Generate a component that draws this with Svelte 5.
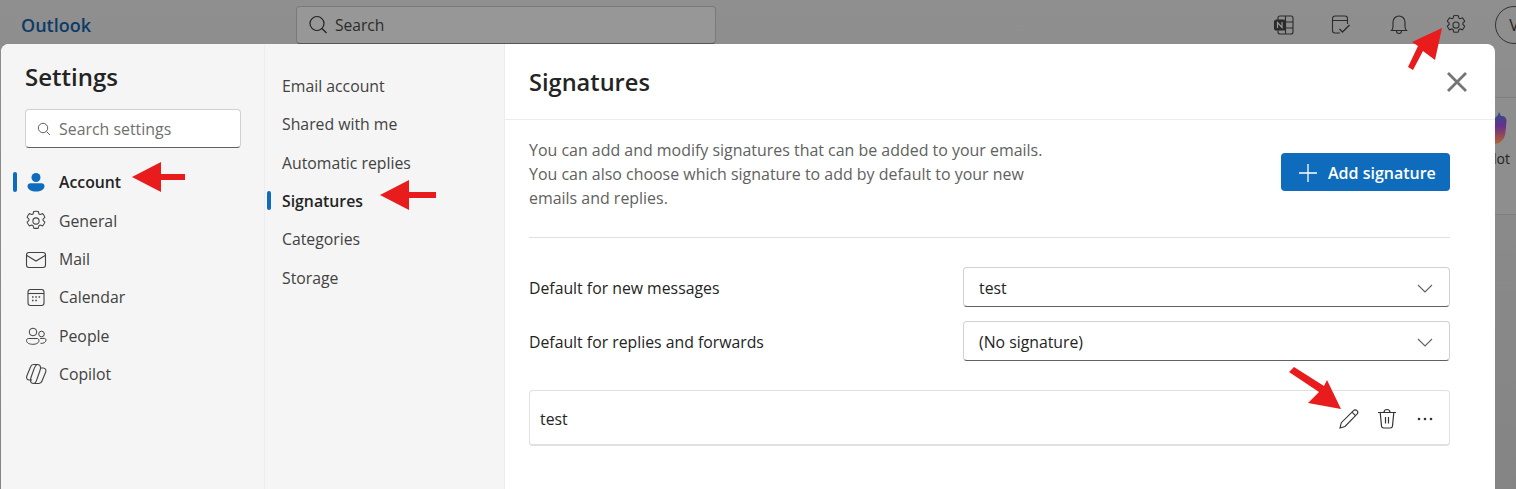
<script>
  const navItems = [
    { label: 'Account', icon: 'account', active: true },
    { label: 'General', icon: 'gear' },
    { label: 'Mail', icon: 'mail' },
    { label: 'Calendar', icon: 'calendar' },
    { label: 'People', icon: 'people' },
    { label: 'Copilot', icon: 'copilot' }
  ]
  const subItems = [
    { label: 'Email account' },
    { label: 'Shared with me' },
    { label: 'Automatic replies' },
    { label: 'Signatures', active: true },
    { label: 'Categories' },
    { label: 'Storage' }
  ]
  const gear = 'M10 2.2c.6 0 1.2.1 1.8.2l.6 2 .9.4 2-.7c.8.8 1.4 1.8 1.8 3l-1.5 1.4v1l1.5 1.4c-.4 1.1-1 2.1-1.8 3l-2-.7-.9.5-.6 2c-1.2.3-2.4.3-3.6 0l-.6-2-.9-.5-2 .7c-.8-.9-1.4-1.9-1.8-3l1.5-1.4v-1L2.9 7.1c.4-1.2 1-2.2 1.8-3l2 .7.9-.4.6-2c.6-.1 1.2-.2 1.8-.2z'
</script>

<div class="page">
  <div class="behind">
    <svg class="behind-logo" viewBox="0 0 12 32" width="12" height="32">
      <defs>
        <linearGradient id="logoFade" x1="0" y1="0" x2="0" y2="1">
          <stop offset="0" stop-color="#2a4f86" />
          <stop offset="0.45" stop-color="#6a2f8a" />
          <stop offset="1" stop-color="#b5642c" />
        </linearGradient>
      </defs>
      <path d="M0 6L3 3L4 0L6 4C10 4 11.5 6 11.5 9L10.5 20C10 27 6 31 0 32Z" fill="url(#logoFade)" />
    </svg>
    <span>lot</span>
  </div>

  <header class="topbar">
    <div class="brand">Outlook</div>
    <div class="search">
      <svg width="20" height="20" viewBox="0 0 20 20" fill="none" stroke="#222" stroke-width="1.2">
        <circle cx="9" cy="8.5" r="7" />
        <path d="M14 13.5l4.5 4.5" />
      </svg>
      <span>Search</span>
    </div>
    <div class="tools">
      <svg width="22" height="22" viewBox="0 0 22 22" fill="none" stroke="#2b2b2b" stroke-width="1.1">
        <rect x="5" y="2" width="15" height="18" rx="2" />
        <path d="M12.5 2v18M12.5 8h7.5M12.5 14h7.5" />
        <rect x="1.5" y="6" width="11" height="10" rx="2" fill="#2b2b2b" />
        <path d="M4.5 14V8.5l4.5 5V8" stroke="#999" stroke-width="1.2" />
      </svg>
      <svg width="22" height="22" viewBox="0 0 22 22" fill="none" stroke="#2b2b2b" stroke-width="1.1">
        <path d="M10 19H5a2.5 2.5 0 0 1-2.5-2.5v-12A2.5 2.5 0 0 1 5 2h10a2.5 2.5 0 0 1 2.5 2.5V10M2.5 6.5h15" />
        <path d="M9.5 15l3 3 7-7" stroke-width="1.3" />
      </svg>
      <svg width="22" height="22" viewBox="-1 0 22 22" fill="none" stroke="#2b2b2b" stroke-width="1.1">
        <path d="M2.5 16.5c1.2-1.2 1.5-2.5 1.5-4V8a6 6 0 0 1 12 0v4.5c0 1.5.3 2.8 1.5 4z" />
        <path d="M7.5 17a2.5 2.5 0 0 0 5 0" />
      </svg>
      <svg width="22" height="22" viewBox="1 1 18 18" fill="none" stroke="#2b2b2b" stroke-width="0.9">
        <path d={gear} />
        <circle cx="10" cy="10" r="2.5" />
      </svg>
      <div class="avatar">V</div>
    </div>
  </header>

  <div class="modal">
    <aside class="col-nav">
      <h1>Settings</h1>
      <div class="settings-search">
        <svg width="14" height="14" viewBox="0 0 14 14" fill="none" stroke="#616161" stroke-width="1">
          <circle cx="6" cy="6" r="4.7" />
          <path d="M9.5 9.5l3.5 3.5" />
        </svg>
        <span>Search settings</span>
      </div>
      <nav class="nav-list">
        {#each navItems as item}
          <div class="nav-item" class:active={item.active}>
            <svg class="nav-icon" width="22" height="22" viewBox="0 0 22 22" fill="none" stroke="#424242" stroke-width="1">
              {#if item.icon === 'account'}
                <circle cx="11" cy="6.5" r="4.5" fill="#0f6cbd" stroke="none" />
                <path d="M2.5 15c0-1.7 1.3-2.8 3-2.8h11c1.7 0 3 1.1 3 2.8 0 3.7-4 5.500-8.500 5.500S2.500 18.700 2.500 15z" fill="#0f6cbd" stroke="none" />
              {:else if item.icon === 'gear'}
                <g transform="translate(11 11) scale(1.25) translate(-10 -10)" stroke-width="0.85">
                  <path d={gear} />
                  <circle cx="10" cy="10" r="2.5" />
                </g>
              {:else if item.icon === 'mail'}
                <rect x="1.5" y="4.5" width="19" height="15" rx="2.5" stroke-width="1.1" />
                <path d="M1.8 7.5L11 13l9.2-5.5" stroke-width="1.1" />
              {:else if item.icon === 'calendar'}
                <rect x="3" y="3.5" width="16" height="16" rx="2.5" stroke-width="1.1" />
                <path d="M3 7.5h16" stroke-width="1.1" />
                <path d="M7 11h1.5M10.3 11h1.5M13.6 11h1.5M7 14.5h1.5M10.3 14.5h1.5" stroke-width="1.4" />
              {:else if item.icon === 'people'}
                <circle cx="8" cy="7" r="3.8" />
                <circle cx="16.5" cy="9" r="2.8" />
                <path d="M1.5 15.5c0-1.3 1-2 2-2H12c1.200 0 2 .8 2 2 0 2.500-2.800 3.800-6.200 3.800s-6.300-1.300-6.300-3.800z" />
                <path d="M15.5 18.300c3.200.3 5.500-1 5.500-3.300 0-1-.8-1.600-1.800-1.600H15" />
              {:else}
                <g stroke-width="1.1">
                  <path d="M12.5 1.5h-4C6.800 1.500 6 2.500 5.500 4L1.800 13c-.8 2 .3 4 2.500 4H7" />
                  <path d="M9.500 20.500H14c1.700 0 2.500-1 3-2.500L20.700 9c.8-2-.3-4-2.500-4h-2.700" />
                  <path d="M12.500 1.500c1.500 0 2.700 1 3 2.500.3 1.700-.5 3.500-1 5l-2.500 7c-.6 2-1 4.500-3.500 4.500-1.500 0-2.700-1-3-2.500-.3-1.700.5-3.500 1-5l2.500-7C10 4 10.500 1.500 12.500 1.500z" />
                </g>
              {/if}
            </svg>
            <span>{item.label}</span>
          </div>
        {/each}
      </nav>
    </aside>

    <section class="col-sub">
      {#each subItems as item}
        <div class="sub-item" class:active={item.active}>{item.label}</div>
      {/each}
    </section>

    <main class="col-main">
      <div class="main-head">
        <h2>Signatures</h2>
        <svg class="close" width="22" height="22" viewBox="0 0 22 22" fill="none" stroke="#757575" stroke-width="2.8">
          <path d="M2 2l18 18M20 2L2 20" />
        </svg>
      </div>
      <div class="main-body">
        <div class="intro">
          <p>You can add and modify signatures that can be added to your emails. You can also choose which signature to add by default to your new emails and replies.</p>
          <button class="add">
            <svg width="18" height="18" viewBox="0 0 18 18" fill="none" stroke="#fff" stroke-width="1.3">
              <path d="M9 0v18M0 9h18" />
            </svg>
            Add signature
          </button>
        </div>
        <div class="field">
          <span>Default for new messages</span>
          <div class="select">
            test
            <svg width="16" height="9" viewBox="0 0 16 9" fill="none" stroke="#616161" stroke-width="1.1"><path d="M1 1l7 7 7-7" /></svg>
          </div>
        </div>
        <div class="field">
          <span>Default for replies and forwards</span>
          <div class="select">
            (No signature)
            <svg width="16" height="9" viewBox="0 0 16 9" fill="none" stroke="#616161" stroke-width="1.1"><path d="M1 1l7 7 7-7" /></svg>
          </div>
        </div>
        <div class="sig-row">
          <span>test</span>
          <div class="sig-actions">
            <svg width="22" height="22" viewBox="0 0 22 22" fill="none" stroke="#333" stroke-width="1.1">
              <path d="M2 20l1.3-5.300L15.500 2.600c1-1 2.500-1 3.500 0s1 2.500 0 3.500L7 18.500z" />
              <path d="M14 4.200l3.700 3.700" />
            </svg>
            <svg width="20" height="22" viewBox="0 0 20 22" fill="none" stroke="#333" stroke-width="1.2">
              <path d="M1 4.500h18M7 4.500a3 3 0 0 1 6 0M3.200 4.500l1.300 13.500a2.200 2.200 0 0 0 2.200 2h6.600a2.200 2.200 0 0 0 2.200-2l1.300-13.500" />
              <path d="M8.500 9v6.500M11.500 9v6.500" />
            </svg>
            <svg width="18" height="4" viewBox="0 0 18 4" fill="#333">
              <circle cx="3" cy="2" r="1.3" /><circle cx="9" cy="2" r="1.3" /><circle cx="15" cy="2" r="1.3" />
            </svg>
          </div>
        </div>
      </div>
    </main>
  </div>

  <svg class="arrows" width="1516" height="489" viewBox="0 0 1516 489" fill="#e81c1c">
    <path d="M132 177L161 162V174H185V180H161V192Z" />
    <path d="M380 195L409 180V192H436V198H409V210Z" />
    <path d="M1442 28L1435 60L1423 51L1413 70L1408 67L1418 46L1412 42Z" />
    <path d="M1341 409L1308 403L1319 392L1289 372L1294 367L1324 386L1327 380Z" />
  </svg>
</div>

<style>
  :global(body) {
    margin: 0;
    font-family: "Open Sans", "Noto Sans", sans-serif;
  }

  .page {
    position: relative;
    width: 1516px;
    height: 489px;
    overflow: hidden;
    background: linear-gradient(#8f8f8f, #848484);
    color: #242424;
    font-size: 15.8px;
  }

  .behind {
    position: absolute;
    left: 1470px;
    top: 97px;
    width: 60px;
    height: 118px;
    background: #8e8e8e;
    border: 1px solid #7f7f7f;
    border-radius: 8px;
    box-sizing: border-box;
    color: #222;
    font-size: 14px;
  }

  .behind-logo {
    position: absolute;
    left: 24px;
    top: 14px;
  }

  .behind span {
    position: absolute;
    left: 22px;
    top: 51px;
  }

  .topbar {
    display: flex;
    align-items: center;
    height: 44px;
    padding-left: 21px;
    position: relative;
    box-sizing: border-box;
  }

  .brand {
    width: 275px;
    color: #0c3b66;
    font-size: 18px;
    font-weight: 600;
    margin-top: 6px;
  }

  .search {
    display: flex;
    align-items: center;
    gap: 7px;
    width: 420px;
    height: 38px;
    margin-top: 6px;
    padding-left: 11px;
    box-sizing: border-box;
    background: #979797;
    border: 1px solid #7a7a7a;
    border-bottom-color: #555;
    border-radius: 4px;
    color: #2b2b2b;
    font-size: 15.6px;
  }

  .tools {
    display: flex;
    align-items: center;
    gap: 35.5px;
    margin-left: auto;
    margin-top: 6px;
    margin-right: -17px;
  }

  .avatar {
    width: 38px;
    height: 38px;
    margin-left: -7.5px;
    box-sizing: border-box;
    border: 1px solid #333;
    border-radius: 50%;
    display: flex;
    align-items: center;
    justify-content: center;
    font-size: 16px;
    color: #222;
  }

  .modal {
    position: relative;
    display: flex;
    width: 1494px;
    height: 445px;
    margin-left: 1px;
    background: #fff;
    border-radius: 8px 8px 0 0;
    overflow: hidden;
  }

  .col-nav {
    width: 264px;
    flex: none;
    background: #f5f5f5;
    border-right: 1px solid #ededed;
    box-sizing: border-box;
    padding: 0 24px;
  }

  h1 {
    margin: 15px 0 0;
    font-size: 24px;
    line-height: 36px;
    font-weight: 600;
    color: #242424;
  }

  .settings-search {
    display: flex;
    align-items: center;
    gap: 8px;
    width: 216px;
    height: 39px;
    margin-top: 14px;
    padding-left: 11px;
    box-sizing: border-box;
    background: #fff;
    border: 1px solid #d1d1d1;
    border-bottom-color: #616161;
    border-radius: 4px;
    color: #707070;
    font-size: 15.9px;
  }

  .nav-list {
    margin-top: 15px;
  }

  .nav-item {
    position: relative;
    display: flex;
    align-items: center;
    gap: 12px;
    height: 38.4px;
    color: #424242;
  }

  .nav-item.active {
    font-weight: 600;
    color: #242424;
  }

  .nav-item.active::before,
  .sub-item.active::before {
    content: "";
    position: absolute;
    top: 9px;
    width: 4px;
    height: 19.5px;
    background: #0f6cbd;
    border-radius: 2px;
  }

  .nav-item.active::before {
    left: -12px;
  }

  .col-sub {
    width: 240px;
    flex: none;
    background: #f5f5f5;
    border-right: 1px solid #ededed;
    box-sizing: border-box;
    padding: 22.7px 0 0 17px;
  }

  .sub-item {
    position: relative;
    display: flex;
    align-items: center;
    height: 38.4px;
    color: #424242;
  }

  .sub-item.active {
    font-weight: 600;
    color: #242424;
  }

  .sub-item.active::before {
    left: -15px;
  }

  .col-main {
    flex: 1;
    min-width: 0;
  }

  .main-head {
    display: flex;
    align-items: center;
    justify-content: space-between;
    height: 76px;
    padding: 0 27px 0 24px;
    border-bottom: 1px solid #ededed;
    box-sizing: border-box;
  }

  h2 {
    margin: 0;
    font-size: 23.6px;
    font-weight: 600;
    color: #242424;
  }

  .main-body {
    padding: 0 45px 0 24px;
  }

  .intro {
    display: flex;
    align-items: center;
    justify-content: space-between;
    height: 117px;
    border-bottom: 1px solid #e0e0e0;
    margin-bottom: 29px;
  }

  .intro p {
    width: 520px;
    margin: 0;
    font-size: 15.95px;
    line-height: 24px;
    color: #616161;
    position: relative;
    top: -5px;
  }

  .add {
    display: flex;
    align-items: center;
    gap: 11px;
    width: 169px;
    height: 38px;
    position: relative;
    top: -7px;
    padding: 2px 0 0 18px;
    border: 0;
    border-radius: 4px;
    background: #0f6cbd;
    color: #fff;
    font: inherit;
    font-size: 16px;
    font-weight: 600;
  }

  .field {
    display: flex;
    align-items: center;
    justify-content: space-between;
    height: 40px;
    margin-bottom: 14px;
  }

  .field > span {
    padding-top: 2px;
  }

  .select {
    display: flex;
    align-items: center;
    justify-content: space-between;
    width: 487px;
    height: 40px;
    padding: 2px 16px 0 15px;
    box-sizing: border-box;
    border: 1px solid #d1d1d1;
    border-bottom-color: #616161;
    border-radius: 4px;
  }

  .sig-row {
    display: flex;
    align-items: center;
    justify-content: space-between;
    height: 56px;
    margin-top: 29px;
    padding: 2px 15px 0 10px;
    box-sizing: border-box;
    border: 1px solid #e0e0e0;
    border-bottom-width: 2px;
    border-radius: 4px;
  }

  .sig-actions {
    display: flex;
    align-items: center;
    gap: 17px;
  }

  .sig-actions svg:last-child {
    margin-left: 2px;
  }

  .arrows {
    position: absolute;
    left: 0;
    top: 0;
    pointer-events: none;
  }
</style>
